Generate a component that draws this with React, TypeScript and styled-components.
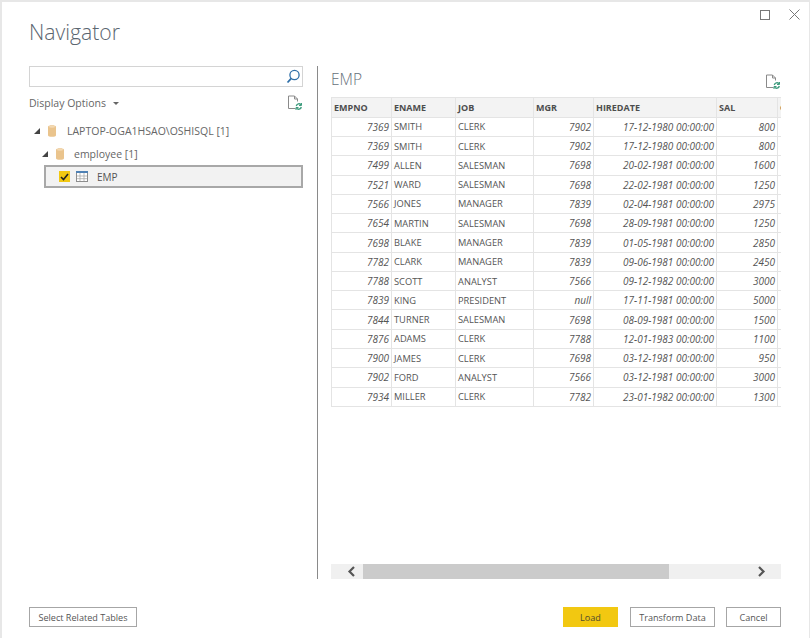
import React from "react";
import styled, { createGlobalStyle } from "styled-components";

const Global = createGlobalStyle`
  html, body { margin: 0; padding: 0; background: #e7e7e7; }
  #root { width: 810px; height: 638px; }
  * { box-sizing: border-box; }
`;

const FONT = `"Open Sans", "Noto Sans", "Liberation Sans", sans-serif`;

const Page = styled.div`
  width: 810px;
  height: 638px;
  padding: 2px 1px 0 2px;
  background: #e7e7e7;
  font-family: ${FONT};
  color: #555;
`;

const Dialog = styled.div`
  height: 100%;
  background: #fff;
  display: flex;
  flex-direction: column;
  padding: 0 28px 0 27px;
`;

const Header = styled.header`
  height: 64px;
  display: flex;
  justify-content: space-between;
  align-items: flex-start;
`;

const Title = styled.h1`
  margin: 16px 0 0;
  font-size: 21.2px;
  line-height: 28px;
  font-weight: 300;
  color: #5b6670;
`;

const WindowControls = styled.div`
  display: flex;
  gap: 19px;
  margin: 7px -19px 0 0;
  align-items: center;
`;

const Main = styled.main`
  height: 513px;
  display: flex;
`;

const LeftPane = styled.section`
  width: 274px;
  display: flex;
  flex-direction: column;
`;

const SearchBox = styled.div`
  height: 21px;
  border: 1px solid #d4d4d4;
  display: flex;
  justify-content: flex-end;
  align-items: center;
  padding-right: 1px;
`;

const OptionsRow = styled.div`
  height: 30px;
  margin-top: 1px;
  display: flex;
  align-items: center;
  justify-content: space-between;
  padding-right: 1px;
`;

const OptionsLabel = styled.span`
  font-size: 10.5px;
  color: #666;
  display: flex;
  align-items: center;
  gap: 7px;
`;

const Caret = styled.span`
  width: 0;
  height: 0;
  border-left: 3px solid transparent;
  border-right: 3px solid transparent;
  border-top: 3px solid #666;
`;

const Tree = styled.div`
  margin-top: 1px;
  display: flex;
  flex-direction: column;
`;

const TreeRow = styled.div<{ $indent: number; $gap: number }>`
  height: 23px;
  display: flex;
  align-items: center;
  padding-left: ${(p) => p.$indent}px;
  gap: ${(p) => p.$gap}px;
  font-size: 10.5px;
  color: #666;
`;

const Expander = styled.span<{ $after: number }>`
  width: 0;
  height: 0;
  border-left: 6px solid transparent;
  border-bottom: 6px solid #444;
  margin-right: ${(p) => p.$after}px;
`;

const SelectedRow = styled.div`
  height: 23px;
  margin-left: 15px;
  border: 2px solid #a8a8a8;
  background: #f2f2f2;
  display: flex;
  align-items: center;
  padding-left: 13px;
  font-size: 10px;
  color: #555;
`;

const CheckBox = styled.span`
  width: 11px;
  height: 11px;
  background: #f2c811;
  display: flex;
  align-items: center;
  justify-content: center;
  margin-right: 6px;
`;

const RowLabel = styled.span`
  margin-left: 9px;
`;

const Divider = styled.div`
  width: 1px;
  margin-left: 14px;
  background: #8a8a8a;
`;

const RightPane = styled.section`
  width: 450px;
  margin-left: 13px;
  display: flex;
  flex-direction: column;
`;

const PreviewHead = styled.div`
  height: 31px;
  display: flex;
  justify-content: space-between;
  align-items: flex-start;
`;

const PreviewTitle = styled.h2`
  margin: 2px 0 0;
  font-size: 15.5px;
  line-height: 22px;
  font-weight: 300;
  color: #66707a;
`;

const RefreshSlot = styled.div`
  margin: 7px 1px 0 0;
`;

const TableClip = styled.div`
  flex: 1;
  overflow: hidden;
`;

const Grid = styled.div`
  width: 506px;
  display: grid;
  grid-template-columns: 60px 64px 78px 60px 123px 61px 60px;
  grid-template-rows: 19.8px;
  grid-auto-rows: 19.28px;
  border-left: 1px solid #e4e4e4;
  border-top: 1px solid #e4e4e4;
`;

const HeadCell = styled.div`
  height: 100%;
  background: #f3f3f3;
  border-right: 1px solid #e4e4e4;
  border-bottom: 1px solid #e4e4e4;
  font-size: 9px;
  font-weight: 700;
  color: #4d4d4d;
  display: flex;
  align-items: center;
  padding-left: 2px;
  overflow: hidden;
  white-space: nowrap;
`;

const Cell = styled.div<{ $num?: boolean }>`
  height: 100%;
  border-right: 1px solid #e4e4e4;
  border-bottom: 1px solid #e4e4e4;
  font-size: ${(p) => (p.$num ? "10px" : "9.3px")};
  color: #555;
  display: flex;
  align-items: center;
  padding: 0 2px;
  overflow: hidden;
  white-space: nowrap;
  justify-content: ${(p) => (p.$num ? "flex-end" : "flex-start")};
  font-style: ${(p) => (p.$num ? "italic" : "normal")};
`;

const ScrollBar = styled.div`
  height: 15px;
  background: #f0f0f0;
  display: flex;
  align-items: center;
`;

const ScrollBtn = styled.div`
  width: 32px;
  height: 15px;
  display: flex;
  align-items: center;
  justify-content: center;
  padding-left: 8px;
`;

const ScrollBtnEnd = styled(ScrollBtn)`
  margin-left: auto;
  width: 40px;
  padding-left: 0;
`;

const Thumb = styled.div`
  width: 306px;
  height: 15px;
  background: #cbcbcb;
`;

const Footer = styled.footer`
  margin-top: 28px;
  display: flex;
  align-items: flex-start;
  gap: 11px;
`;

const Btn = styled.button<{ $w: number; $primary?: boolean }>`
  width: ${(p) => p.$w}px;
  height: 20px;
  padding: 0;
  font-family: ${FONT};
  font-size: 9.1px;
  color: ${(p) => (p.$primary ? "#4f4a2e" : "#555")};
  background: ${(p) => (p.$primary ? "#f2c811" : "#fff")};
  border: ${(p) => (p.$primary ? "none" : "1px solid #a6a6a6")};
  margin-right: ${(p) => (p.$primary ? "1px" : "0")};
`;

const Spacer = styled.div`
  flex: 1;
`;

const Db = () => (
  <svg width="8" height="12" viewBox="0 0 8 12">
    <path d="M0 1.800C0 .8 1.800.3 4 .3S8 .8 8 1.800v8.400c0 1-1.800 1.500-4 1.500s-4-.5-4-1.500z" fill="#eac48d" />
    <ellipse cx="4" cy="1.800" rx="3.200" ry="1" fill="#f3d9b2" />
  </svg>
);

const PageRefresh = () => (
  <svg width="15" height="16" viewBox="0 0 15 16" fill="none">
    <path d="M8.500 13.500H1.500V1H7.500L10.500 4V6.500" stroke="#8a8a8a" strokeWidth="1" />
    <path d="M7.500 1V4H10.500" stroke="#8a8a8a" strokeWidth="1" />
    <path d="M9.300 11a2.800 2.800 0 0 1 4.800-1.300M14.300 12a2.800 2.800 0 0 1-4.800 1.300" stroke="#3f9c7e" strokeWidth="1.400" />
    <path d="M14.500 8v2.500H12M9 15v-2.500h2.500" stroke="#3f9c7e" strokeWidth="1" />
  </svg>
);

const columns = ["EMPNO", "ENAME", "JOB", "MGR", "HIREDATE", "SAL", "COMM"];
const rows: string[][] = [
  ["7369", "SMITH", "CLERK", "7902", "17-12-1980 00:00:00", "800"],
  ["7369", "SMITH", "CLERK", "7902", "17-12-1980 00:00:00", "800"],
  ["7499", "ALLEN", "SALESMAN", "7698", "20-02-1981 00:00:00", "1600"],
  ["7521", "WARD", "SALESMAN", "7698", "22-02-1981 00:00:00", "1250"],
  ["7566", "JONES", "MANAGER", "7839", "02-04-1981 00:00:00", "2975"],
  ["7654", "MARTIN", "SALESMAN", "7698", "28-09-1981 00:00:00", "1250"],
  ["7698", "BLAKE", "MANAGER", "7839", "01-05-1981 00:00:00", "2850"],
  ["7782", "CLARK", "MANAGER", "7839", "09-06-1981 00:00:00", "2450"],
  ["7788", "SCOTT", "ANALYST", "7566", "09-12-1982 00:00:00", "3000"],
  ["7839", "KING", "PRESIDENT", "null", "17-11-1981 00:00:00", "5000"],
  ["7844", "TURNER", "SALESMAN", "7698", "08-09-1981 00:00:00", "1500"],
  ["7876", "ADAMS", "CLERK", "7788", "12-01-1983 00:00:00", "1100"],
  ["7900", "JAMES", "CLERK", "7698", "03-12-1981 00:00:00", "950"],
  ["7902", "FORD", "ANALYST", "7566", "03-12-1981 00:00:00", "3000"],
  ["7934", "MILLER", "CLERK", "7782", "23-01-1982 00:00:00", "1300"],
];

export default function App() {
  return (
    <Page>
      <Global />
      <Dialog>
        <Header>
          <Title>Navigator</Title>
          <WindowControls>
            <svg width="10" height="10" viewBox="0 0 10 10" fill="none">
              <rect x=".5" y=".5" width="9" height="9" stroke="#777" />
            </svg>
            <svg width="11" height="11" viewBox="0 0 11 11" fill="none">
              <path d="M.5.5l10 10M10.500.5l-10 10" stroke="#777" />
            </svg>
          </WindowControls>
        </Header>
        <Main>
          <LeftPane>
            <SearchBox>
              <svg width="16" height="15" viewBox="0 0 16 15" fill="none">
                <circle cx="9.500" cy="6" r="4.600" stroke="#2f6fa8" strokeWidth="1.300" />
                <path d="M6.300 9.300L2.500 13.500" stroke="#2f6fa8" strokeWidth="1.800" />
              </svg>
            </SearchBox>
            <OptionsRow>
              <OptionsLabel>
                Display Options <Caret />
              </OptionsLabel>
              <PageRefresh />
            </OptionsRow>
            <Tree>
              <TreeRow $indent={5} $gap={2}>
                <Expander $after={6} />
                <Db />
                <RowLabel>LAPTOP-OGA1HSAO\OSHISQL [1]</RowLabel>
              </TreeRow>
              <TreeRow $indent={13} $gap={1}>
                <Expander $after={7} />
                <Db />
                <RowLabel>employee [1]</RowLabel>
              </TreeRow>
              <SelectedRow>
                <CheckBox>
                  <svg width="9" height="8" viewBox="0 0 9 8" fill="none">
                    <path d="M1 4l2.500 2.500L8 1" stroke="#222" strokeWidth="1.600" />
                  </svg>
                </CheckBox>
                <svg width="12" height="11" viewBox="0 0 12 11" fill="none">
                  <rect x=".5" y=".5" width="11" height="10" fill="#fff" stroke="#8d8d8d" />
                  <rect x="0" y="0" width="12" height="2" fill="#4f81b5" />
                  <path d="M4 2v8M8 2v8M1 5h10M1 7.700h10" stroke="#a9a9a9" strokeWidth=".8" />
                </svg>
                <RowLabel>EMP</RowLabel>
              </SelectedRow>
            </Tree>
          </LeftPane>
          <Divider />
          <RightPane>
            <PreviewHead>
              <PreviewTitle>EMP</PreviewTitle>
              <RefreshSlot>
                <PageRefresh />
              </RefreshSlot>
            </PreviewHead>
            <TableClip>
              <Grid>
                {columns.map((c) => (
                  <HeadCell key={c}>{c}</HeadCell>
                ))}
                {rows.map((r, i) => (
                  <React.Fragment key={i}>
                    <Cell $num>{r[0]}</Cell>
                    <Cell>{r[1]}</Cell>
                    <Cell>{r[2]}</Cell>
                    <Cell $num>{r[3]}</Cell>
                    <Cell $num>{r[4]}</Cell>
                    <Cell $num>{r[5]}</Cell>
                    <Cell $num />
                  </React.Fragment>
                ))}
              </Grid>
            </TableClip>
            <ScrollBar>
              <ScrollBtn>
                <svg width="9" height="11" viewBox="0 0 9 11" fill="none">
                  <path d="M7 1L2.500 5.500 7 10" stroke="#555" strokeWidth="2.200" />
                </svg>
              </ScrollBtn>
              <Thumb />
              <ScrollBtnEnd>
                <svg width="9" height="11" viewBox="0 0 9 11" fill="none">
                  <path d="M2 1l4.500 4.500L2 10" stroke="#555" strokeWidth="2.200" />
                </svg>
              </ScrollBtnEnd>
            </ScrollBar>
          </RightPane>
        </Main>
        <Footer>
          <Btn $w={108}>Select Related Tables</Btn>
          <Spacer />
          <Btn $w={55} $primary>Load</Btn>
          <Btn $w={85}>Transform Data</Btn>
          <Btn $w={55}>Cancel</Btn>
        </Footer>
      </Dialog>
    </Page>
  );
}
